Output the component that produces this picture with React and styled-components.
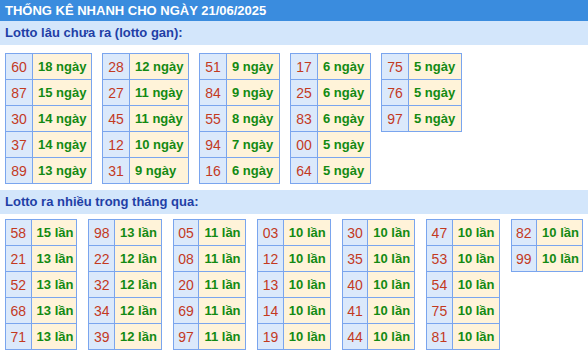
import React from 'react';
import styled, { createGlobalStyle } from 'styled-components';

const GlobalStyle = createGlobalStyle`
    body {
        margin: 0;
        background: #fff;
        font-family: "Liberation Sans", Arial, sans-serif;
    }
`;

const gan = [
    [['60', 18], ['87', 15], ['30', 14], ['37', 14], ['89', 13]],
    [['28', 12], ['27', 11], ['45', 11], ['12', 10], ['31', 9]],
    [['51', 9], ['84', 9], ['55', 8], ['94', 7], ['16', 6]],
    [['17', 6], ['25', 6], ['83', 6], ['00', 5], ['64', 5]],
    [['75', 5], ['76', 5], ['97', 5]],
];

const nhieu = [
    [['58', 15], ['21', 13], ['52', 13], ['68', 13], ['71', 13]],
    [['98', 13], ['22', 12], ['32', 12], ['34', 12], ['39', 12]],
    [['05', 11], ['08', 11], ['20', 11], ['69', 11], ['97', 11]],
    [['03', 10], ['12', 10], ['13', 10], ['14', 10], ['19', 10]],
    [['30', 10], ['35', 10], ['40', 10], ['41', 10], ['44', 10]],
    [['47', 10], ['53', 10], ['54', 10], ['75', 10], ['81', 10]],
    [['82', 10], ['99', 10]],
];

const Page = styled.div`
    width: 588px;
`;

const Header = styled.div`
    height: 21px;
    background-color: #3a8cde;
    color: #fff;
    font-size: 13px;
    font-weight: bold;
    line-height: 22px;
    padding-left: 5px;
`;

const SectionTitle = styled.div`
    height: 24px;
    background-color: #d3e6fb;
    color: #1f3fa6;
    font-size: 13px;
    font-weight: bold;
    line-height: 24px;
    padding-left: 5px;
    margin-top: ${props => props.gap};
`;

const TableRow = styled.div`
    display: flex;
    align-items: flex-start;
    gap: ${props => props.gap};
    padding: 0 5px;
    margin-top: ${props => props.top};
`;

const Table = styled.table`
    border-collapse: collapse;
    border: 1px solid #7aa5ee;
`;

const NumCell = styled.td`
    height: 25px;
    padding: 0;
    width: ${props => props.w};
    background-color: #dbe9fb;
    border: 1px solid #7aa5ee;
    color: #c33a1f;
    font-size: 14px;
    text-align: center;
`;

const CountCell = styled.td`
    height: 25px;
    padding: 0 0 0 5px;
    width: ${props => props.w};
    background-color: #fff3d9;
    border: 1px solid #7aa5ee;
    color: #138a13;
    font-size: 13px;
    font-weight: bold;
    text-align: left;
`;

const ganWidths = [53, 53, 47, 47, 47];
const nhieuWidths = [41, 42, 42, 42, 42, 42, 41];

const StatTable = ({ rows, unit, countWidth, numWidth }) => (
    <Table>
        <tbody>
            {rows.map(([n, c], i) => (
                <tr key={i}>
                    <NumCell w={numWidth}>{n}</NumCell>
                    <CountCell w={countWidth}>{c} {unit}</CountCell>
                </tr>
            ))}
        </tbody>
    </Table>
);

export default function App() {
    return (
        <Page>
            <GlobalStyle />
            <Header>THỐNG KÊ NHANH CHO NGÀY 21/06/2025</Header>
            <SectionTitle gap="0">Lotto lâu chưa ra (lotto gan):</SectionTitle>
            <TableRow gap="10px" top="8px">
                {gan.map((rows, i) => (
                    <StatTable key={i} rows={rows} unit="ngày" numWidth="26px" countWidth={ganWidths[i] + 'px'} />
                ))}
            </TableRow>
            <SectionTitle gap="6px">Lotto ra nhiều trong tháng qua:</SectionTitle>
            <TableRow gap="11px" top="5px">
                {nhieu.map((rows, i) => (
                    <StatTable key={i} rows={rows} unit="lần" numWidth="25px" countWidth={nhieuWidths[i] + 'px'} />
                ))}
            </TableRow>
        </Page>
    );
}
